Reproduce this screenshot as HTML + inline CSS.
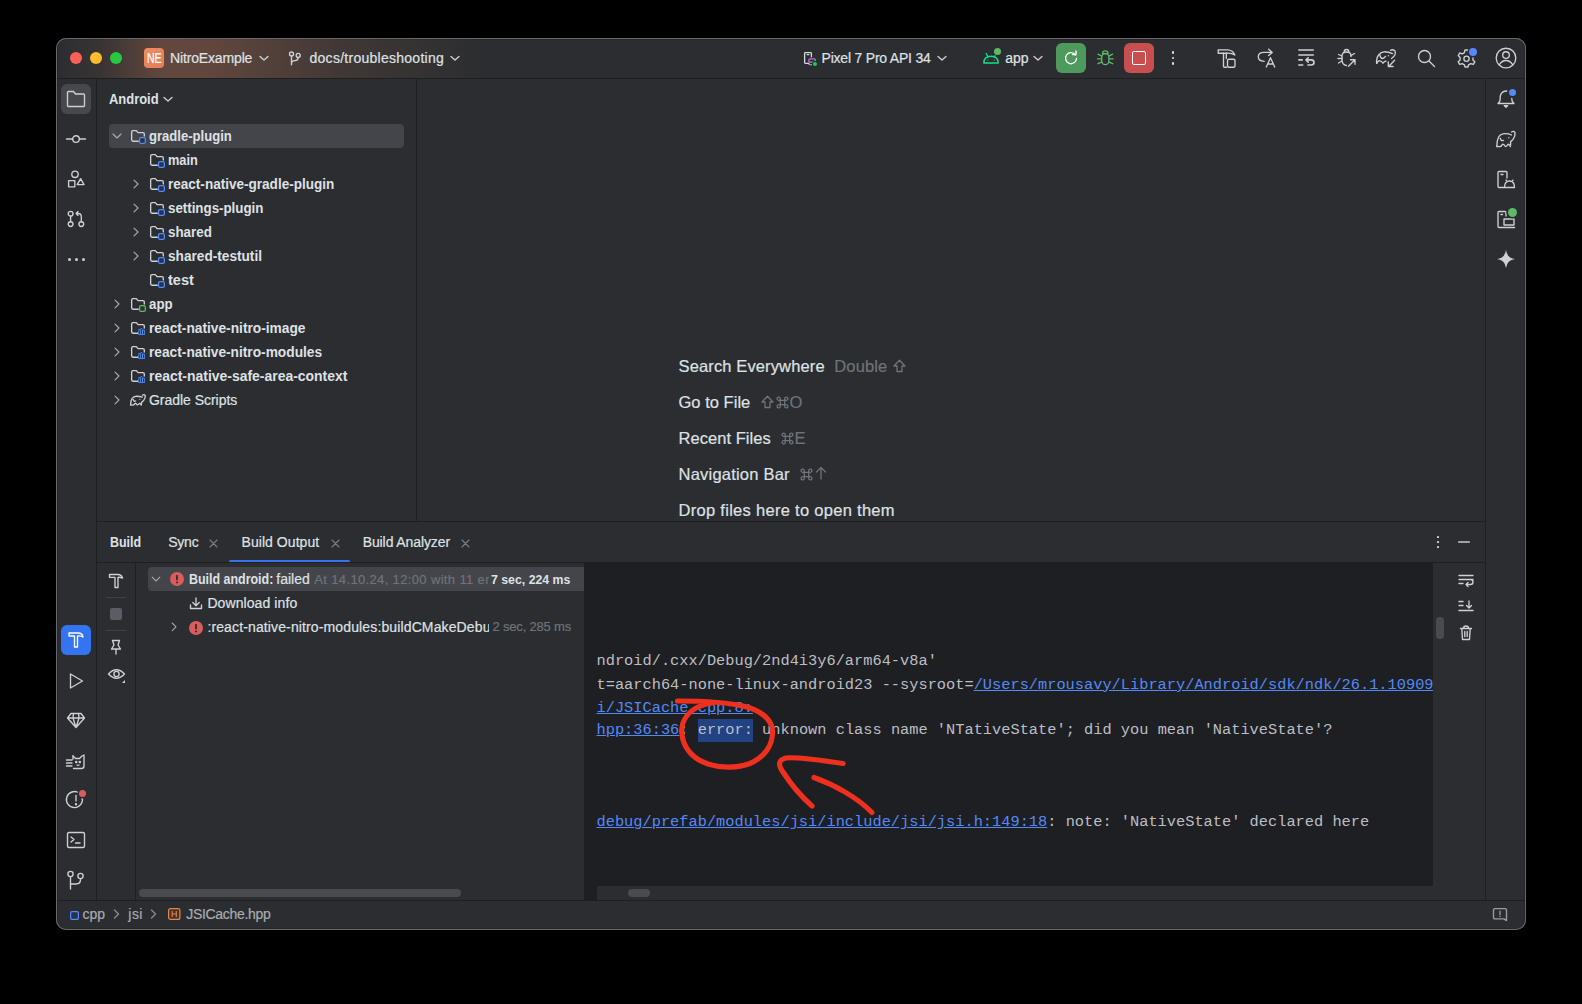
<!DOCTYPE html>
<html><head><meta charset="utf-8"><title>Android Studio</title>
<style>
html,body{margin:0;padding:0;background:#000;width:1582px;height:1004px;overflow:hidden;}
.r{position:absolute;}
.t{position:absolute;white-space:pre;-webkit-text-stroke:0.2px currentColor;}
svg.r{overflow:visible;}
</style></head><body>
<div class="r" style="left:56px;top:38px;width:1470px;height:892px;border-radius:10px;background:#2b2d30;box-shadow:0 0 0 1px #68696c inset, 0 0 0 2px #26272a inset;overflow:hidden;"></div>
<div class="r" style="left:57px;top:39px;width:1468px;height:39px;border-radius:9px 9px 0 0;background:linear-gradient(90deg, rgba(120,85,70,0.0) 0px, rgba(125,85,68,0.18) 45px, rgba(140,92,72,0.56) 105px, rgba(138,90,72,0.56) 155px, rgba(120,85,70,0.27) 285px, rgba(120,85,70,0.0) 430px);"></div>
<div class="r" style="left:57px;top:78px;width:1468px;height:1px;background:#1e1f22;"></div>
<div class="r" style="left:70px;top:52px;width:12px;height:12px;background:#fe5f57;border-radius:50%;"></div>
<div class="r" style="left:90px;top:52px;width:12px;height:12px;background:#febc2e;border-radius:50%;"></div>
<div class="r" style="left:110px;top:52px;width:12px;height:12px;background:#28c840;border-radius:50%;"></div>
<div class="r" style="left:144px;top:48px;width:20px;height:20px;border-radius:4px;background:linear-gradient(135deg,#ee8c5e,#e27e5c);"></div>
<div class="t" style="left:146.8px;top:51.15px;font-family:'Liberation Sans', sans-serif;font-size:14px;line-height:14px;font-weight:400;color:#ffffff;transform:scaleX(0.7505);transform-origin:0 0;">NE</div>
<div class="t" style="left:170px;top:50.95px;font-family:'Liberation Sans', sans-serif;font-size:14px;line-height:14px;font-weight:400;color:#dfe1e5;letter-spacing:-0.148px;">NitroExample</div>
<svg class="r" style="left:258px;top:54px;" width="12" height="8" viewBox="0 0 12 8" fill="none" stroke="#ced0d6" stroke-width="1.35" stroke-linecap="round" stroke-linejoin="round"><path d="M2 2.5 L6 6 L10 2.5"/></svg>
<svg class="r" style="left:287px;top:49px;" width="16" height="18" viewBox="0 0 16 18" fill="none" stroke="#ced0d6" stroke-width="1.35" stroke-linecap="round" stroke-linejoin="round"><circle cx="4.5" cy="5" r="2"/><circle cx="11.2" cy="6.4" r="2"/><path d="M4.5 7 V15.8 M11.2 8.4 Q11.2 11.2 8 11.6 Q4.5 12 4.5 14"/></svg>
<div class="t" style="left:309.5px;top:50.95px;font-family:'Liberation Sans', sans-serif;font-size:14px;line-height:14px;font-weight:400;color:#dfe1e5;letter-spacing:0.268px;">docs/troubleshooting</div>
<svg class="r" style="left:449px;top:54px;" width="12" height="8" viewBox="0 0 12 8" fill="none" stroke="#ced0d6" stroke-width="1.35" stroke-linecap="round" stroke-linejoin="round"><path d="M2 2.5 L6 6 L10 2.5"/></svg>
<svg class="r" style="left:802px;top:50px;" width="18" height="18" viewBox="0 0 18 18" fill="none" stroke="#ced0d6" stroke-width="1.35" stroke-linecap="round" stroke-linejoin="round"><path d="M7 13.3 H3.4 Q2.6 13.3 2.6 12.5 V3.4 Q2.6 2.6 3.4 2.6 H8.6 Q9.4 2.6 9.4 3.4 V6.8" stroke="#d6d8dc" stroke-width="1.3"/><path d="M5.1 4.6 H6.9" stroke="#d6d8dc" stroke-width="1.1"/><rect x="6.9" y="8.8" width="6.3" height="3.4" rx="0.9" stroke="#b974e8" stroke-width="1.3"/><path d="M6.9 14.6 H11.4" stroke="#b974e8" stroke-width="1.3"/></svg>
<div class="r" style="left:813px;top:61.9px;width:4.4px;height:4.4px;background:#00dd3a;border-radius:50%;box-shadow:0 0 0 1px #2b2d30;"></div>
<div class="t" style="left:821.5px;top:51.05px;font-family:'Liberation Sans', sans-serif;font-size:14px;line-height:14px;font-weight:400;color:#dfe1e5;letter-spacing:-0.208px;">Pixel 7 Pro API 34</div>
<svg class="r" style="left:936px;top:54px;" width="12" height="8" viewBox="0 0 12 8" fill="none" stroke="#ced0d6" stroke-width="1.35" stroke-linecap="round" stroke-linejoin="round"><path d="M2 2.5 L6 6 L10 2.5"/></svg>
<svg class="r" style="left:982px;top:50px;" width="18" height="14" viewBox="0 0 18 14" fill="none" stroke="#ced0d6" stroke-width="1.35" stroke-linecap="round" stroke-linejoin="round"><path d="M1.8 13 Q1.8 6.2 9 6.2 Q16.2 6.2 16.2 13 Z" stroke="#14e08a" stroke-width="1.4"/><path d="M4.2 3.5 L5.8 6.3 M13.8 4.5 L12.6 6.3" stroke="#14e08a" stroke-width="1.4"/><circle cx="5.8" cy="10" r="0.9" fill="#1f7a50" stroke="none"/><circle cx="12.2" cy="10" r="0.9" fill="#1f7a50" stroke="none"/></svg>
<div class="r" style="left:994px;top:48px;width:7px;height:7px;background:#5fb865;border-radius:50%;box-shadow:0 0 0 1px #2b2d30;"></div>
<div class="t" style="left:1005.3px;top:51.05px;font-family:'Liberation Sans', sans-serif;font-size:14px;line-height:14px;font-weight:400;color:#dfe1e5;letter-spacing:-0.030px;">app</div>
<svg class="r" style="left:1032px;top:54px;" width="12" height="8" viewBox="0 0 12 8" fill="none" stroke="#ced0d6" stroke-width="1.35" stroke-linecap="round" stroke-linejoin="round"><path d="M2 2.5 L6 6 L10 2.5"/></svg>
<div class="r" style="left:1056px;top:43px;width:30px;height:30px;background:#4e9a5c;border-radius:6px;"></div>
<svg class="r" style="left:1063px;top:50px;" width="16" height="16" viewBox="0 0 16 16" fill="none" stroke="#ced0d6" stroke-width="1.35" stroke-linecap="round" stroke-linejoin="round"><path d="M12.5 5 A5.5 5.5 0 1 0 13.5 8.5" stroke="#ffffff"/><path d="M9.5 4.5 H13 V1" stroke="#ffffff"/></svg>
<svg class="r" style="left:1096px;top:49px;" width="18" height="18" viewBox="0 0 18 18" fill="none" stroke="#ced0d6" stroke-width="1.35" stroke-linecap="round" stroke-linejoin="round"><path d="M6.5 4.6 Q6.5 1.9 9.3 1.9 Q12.1 1.9 12.1 4.6 Z" stroke="#5fb865" stroke-width="1.3"/><rect x="5.7" y="4.6" width="7.2" height="11" rx="3.6" stroke="#5fb865" stroke-width="1.3"/><path d="M2 5.2 L5.8 7.2 M1.4 9.8 H5.7 M2 14.7 L5.8 12.8 M16.6 5.2 L12.8 7.2 M17.2 9.8 H12.9 M16.6 14.7 L12.8 12.8" stroke="#5fb865" stroke-width="1.3"/></svg>
<div class="r" style="left:1124px;top:43px;width:30px;height:30px;background:#c94f4f;border-radius:6px;"></div>
<div class="r" style="left:1132px;top:51px;width:14px;height:14px;background:transparent;border:1.5px solid #ffffff;border-radius:2px;box-sizing:border-box;"></div>
<div class="r" style="left:1171.7px;top:51.300000000000004px;width:2.6px;height:2.6px;background:#dfe1e5;border-radius:50%;"></div>
<div class="r" style="left:1171.7px;top:56.7px;width:2.6px;height:2.6px;background:#dfe1e5;border-radius:50%;"></div>
<div class="r" style="left:1171.7px;top:62.1px;width:2.6px;height:2.6px;background:#dfe1e5;border-radius:50%;"></div>
<svg class="r" style="left:1217px;top:48px;" width="20" height="20" viewBox="0 0 20 20" fill="none" stroke="#ced0d6" stroke-width="1.35" stroke-linecap="round" stroke-linejoin="round"><path d="M1.2 1.8 H10.5 Q16 2 17.8 7 Q14.5 5 10.5 5.2 H1.2 Z"/><path d="M6.5 5.2 V18.5 Q6.5 19.2 7.5 19.2 H9.5 M9.3 5.2 V10.5"/><rect x="10.5" y="11.2" width="7.5" height="8" rx="1.5"/></svg>
<svg class="r" style="left:1257px;top:48px;" width="20" height="20" viewBox="0 0 20 20" fill="none" stroke="#ced0d6" stroke-width="1.35" stroke-linecap="round" stroke-linejoin="round"><path d="M7 4.4 H15.2 M11.6 1.2 L15.2 4.4 L11.6 7.6"/><path d="M7 4.4 Q1.3 4.4 1.3 8.8 Q1.3 13.3 7.2 13.3"/><path d="M9.3 19 L13.5 9.7 L17.7 19 M10.7 16 H16.3"/></svg>
<svg class="r" style="left:1297px;top:48px;" width="20" height="20" viewBox="0 0 20 20" fill="none" stroke="#ced0d6" stroke-width="1.35" stroke-linecap="round" stroke-linejoin="round"><path d="M1.3 2 H16.8 M1.3 7 H16.8 M1.3 11.9 H5.8 M1.3 17 H6.3" stroke-width="1.7" stroke-linecap="butt"/><path d="M9.5 11.9 H14 Q17 11.9 17 14.5 Q17 17 14 17 H11" stroke-width="1.6"/><path d="M11.2 9.7 L9 11.9 L11.2 14.1" stroke-width="1.6"/></svg>
<svg class="r" style="left:1337px;top:48px;" width="20" height="20" viewBox="0 0 20 20" fill="none" stroke="#ced0d6" stroke-width="1.35" stroke-linecap="round" stroke-linejoin="round"><path d="M7.2 4 Q7.2 1.5 9.5 1.5 Q11.8 1.5 11.8 4"/><path d="M14 8.5 V8 Q14 4 9.5 4 Q5 4 5 8 V11.5 Q5 17 9.5 17.5"/><path d="M1.5 6.5 L5 8 M1 10.5 H5 M1.5 15 L5 13 M17.5 5.5 L14 7.5"/><path d="M11.5 18.2 L18 11.7 M13.5 11.7 H18 V16.2"/></svg>
<svg class="r" style="left:1376px;top:48px;" width="21" height="20" viewBox="0 0 21 20" fill="none" stroke="#ced0d6" stroke-width="1.35" stroke-linecap="round" stroke-linejoin="round"><path d="M0.7 15.4 Q0 10 3 6.5 Q5 4 8 3.8 Q12 3.6 16.5 5.6"/><path d="M14.5 2.3 Q16.8 1.2 18.6 2.5 Q20 4 19 6.8 Q18 9 15.5 10.5"/><path d="M3.8 6.9 Q4.5 10.5 6.4 10.5 Q8 10.3 9.5 8.4"/><circle cx="12.4" cy="7.7" r="0.7" fill="#ced0d6" stroke="none"/><path d="M0.7 15.4 Q2 12.5 3.8 12.8 Q5.5 13 7 15.2 Q8.5 13 10.1 13.1"/><path d="M18.6 12.3 L12.7 18.5 M12.3 13.8 V18.5 H17.1"/></svg>
<svg class="r" style="left:1417px;top:49px;" width="19" height="19" viewBox="0 0 19 19" fill="none" stroke="#ced0d6" stroke-width="1.35" stroke-linecap="round" stroke-linejoin="round"><circle cx="7.5" cy="7.5" r="6"/><path d="M12 12 L17.5 17.5"/></svg>
<svg class="r" style="left:1457px;top:48px;" width="19" height="20" viewBox="0 0 19 20" fill="none" stroke="#ced0d6" stroke-width="1.35" stroke-linecap="round" stroke-linejoin="round"><path d="M8 2 H11 L11.6 4.6 L13.8 5.8 L16.3 5 L17.8 7.6 L15.9 9.5 V11.9 L17.8 13.8 L16.3 16.4 L13.8 15.6 L11.6 16.8 L11 19 H8 L7.4 16.8 L5.2 15.6 L2.7 16.4 L1.2 13.8 L3.1 11.9 V9.5 L1.2 7.6 L2.7 5 L5.2 5.8 L7.4 4.6 Z"/><circle cx="9.5" cy="10.7" r="2.6"/></svg>
<div class="r" style="left:1469px;top:48px;width:8px;height:8px;background:#548af7;border-radius:50%;box-shadow:0 0 0 1.5px #2b2d30;"></div>
<svg class="r" style="left:1495px;top:47px;" width="22" height="22" viewBox="0 0 22 22" fill="none" stroke="#ced0d6" stroke-width="1.35" stroke-linecap="round" stroke-linejoin="round"><circle cx="11" cy="11" r="9.8"/><circle cx="11" cy="8" r="3.3"/><path d="M4.5 17.5 Q7 13.5 11 13.5 Q15 13.5 17.5 17.5"/></svg>
<div class="r" style="left:96px;top:79px;width:1px;height:821px;background:#1e1f22;"></div>
<div class="r" style="left:61px;top:84px;width:30px;height:30px;background:#47484c;border-radius:6px;"></div>
<svg class="r" style="left:66px;top:90px;" width="20" height="18" viewBox="0 0 20 18" fill="none" stroke="#ced0d6" stroke-width="1.35" stroke-linecap="round" stroke-linejoin="round"><path d="M1.5 2.5 Q1.5 1.5 2.5 1.5 H7.5 L9.5 4 H17.5 Q18.5 4 18.5 5 V15.5 Q18.5 16.5 17.5 16.5 H2.5 Q1.5 16.5 1.5 15.5 Z"/></svg>
<svg class="r" style="left:65px;top:133px;" width="22" height="12" viewBox="0 0 22 12" fill="none" stroke="#ced0d6" stroke-width="1.35" stroke-linecap="round" stroke-linejoin="round"><circle cx="11" cy="6" r="3.3"/><path d="M1.5 6 H7.7 M14.3 6 H20.5"/></svg>
<svg class="r" style="left:67px;top:170px;" width="18" height="18" viewBox="0 0 18 18" fill="none" stroke="#ced0d6" stroke-width="1.35" stroke-linecap="round" stroke-linejoin="round"><circle cx="8" cy="4.3" r="3.2"/><rect x="1.6" y="10.6" width="6.2" height="6.2"/><path d="M13.6 8.6 L17 14.6 H10.2 Z"/></svg>
<svg class="r" style="left:67px;top:210px;" width="18" height="18" viewBox="0 0 18 18" fill="none" stroke="#ced0d6" stroke-width="1.35" stroke-linecap="round" stroke-linejoin="round"><circle cx="3.6" cy="3.7" r="2.4"/><circle cx="3.6" cy="14.1" r="2.4"/><circle cx="14.3" cy="14.1" r="2.4"/><path d="M3.6 6.1 V11.7 M14.3 11.7 V6.8 Q14.3 3.5 11.3 3.5 H9.2 M11 1.6 L9.1 3.5 L11 5.4"/></svg>
<div class="r" style="left:67.5px;top:257.5px;width:3px;height:3px;background:#ced0d6;border-radius:50%;"></div>
<div class="r" style="left:74.5px;top:257.5px;width:3px;height:3px;background:#ced0d6;border-radius:50%;"></div>
<div class="r" style="left:81.5px;top:257.5px;width:3px;height:3px;background:#ced0d6;border-radius:50%;"></div>
<div class="r" style="left:61px;top:625px;width:30px;height:30px;background:#3574f0;border-radius:6px;"></div>
<svg class="r" style="left:66px;top:630px;" width="20" height="20" viewBox="0 0 20 20" fill="none" stroke="#ced0d6" stroke-width="1.35" stroke-linecap="round" stroke-linejoin="round"><path d="M3 3 H12 Q16.5 3 17 7 Q14 5.5 11.5 6 V17 H8.5 V6 H3 Z" stroke="#ffffff"/></svg>
<svg class="r" style="left:67px;top:672px;" width="18" height="18" viewBox="0 0 18 18" fill="none" stroke="#ced0d6" stroke-width="1.35" stroke-linecap="round" stroke-linejoin="round"><path d="M3.5 2 L15.5 9 L3.5 16 Z"/></svg>
<svg class="r" style="left:66px;top:712px;" width="20" height="17" viewBox="0 0 20 17" fill="none" stroke="#ced0d6" stroke-width="1.35" stroke-linecap="round" stroke-linejoin="round"><path d="M5 1.5 H15 L18.5 6 L10 15.5 L1.5 6 Z M1.5 6 H18.5 M7 6 L10 15.5 L13 6 M7.5 1.5 L7 6 M12.5 1.5 L13 6"/></svg>
<svg class="r" style="left:65px;top:753px;" width="22" height="17" viewBox="0 0 22 17" fill="none" stroke="#ced0d6" stroke-width="1.35" stroke-linecap="round" stroke-linejoin="round"><path d="M8 3 L10.5 5.5 H14.5 L17 3 L19 2 V13 Q19 15.5 16.5 15.5 H8.5"/><path d="M1.5 7 H7 M1.5 10 H7 M1.5 13 H7 M8 3 V6"/><circle cx="11.2" cy="9" r="0.6" fill="#ced0d6"/><circle cx="14.8" cy="9" r="0.6" fill="#ced0d6"/><path d="M12 12 L13 12.5 L14 12"/></svg>
<svg class="r" style="left:66px;top:790px;" width="20" height="20" viewBox="0 0 20 20" fill="none" stroke="#ced0d6" stroke-width="1.35" stroke-linecap="round" stroke-linejoin="round"><path d="M16 7 A8 8 0 1 1 13 3"/><path d="M10 5.5 V11"/><circle cx="10" cy="14.2" r="0.5" fill="#ced0d6"/></svg>
<div class="r" style="left:79px;top:789.5px;width:7px;height:7px;background:#db5c5c;border-radius:50%;box-shadow:0 0 0 1.5px #2b2d30;"></div>
<svg class="r" style="left:66px;top:831px;" width="20" height="18" viewBox="0 0 20 18" fill="none" stroke="#ced0d6" stroke-width="1.35" stroke-linecap="round" stroke-linejoin="round"><rect x="1.5" y="1.5" width="17" height="15" rx="1.5"/><path d="M5 6 L8 8.5 L5 11 M9.5 12 H14"/></svg>
<svg class="r" style="left:66px;top:870px;" width="20" height="20" viewBox="0 0 20 20" fill="none" stroke="#ced0d6" stroke-width="1.35" stroke-linecap="round" stroke-linejoin="round"><circle cx="4.5" cy="4" r="2.6"/><circle cx="14.5" cy="6" r="2.6"/><path d="M4.5 6.6 V19 M4.5 14 H10 Q14.5 14 14.5 9.5 V8.6"/></svg>
<div class="r" style="left:416px;top:79px;width:1px;height:442px;background:#1e1f22;"></div>
<div class="t" style="left:109px;top:92.15px;font-family:'Liberation Sans', sans-serif;font-size:14px;line-height:14px;font-weight:700;color:#dfe1e5;-webkit-text-stroke:0;transform:scaleX(0.9244);transform-origin:0 0;">Android</div>
<svg class="r" style="left:162px;top:95px;" width="12" height="8" viewBox="0 0 12 8" fill="none" stroke="#ced0d6" stroke-width="1.35" stroke-linecap="round" stroke-linejoin="round"><path d="M2 2.5 L6 6 L10 2.5"/></svg>
<div class="r" style="left:109px;top:124px;width:295px;height:24px;background:#43454a;border-radius:4px;"></div>
<svg class="r" style="left:111px;top:131px;" width="12" height="10" viewBox="0 0 12 10" fill="none" stroke="#ced0d6" stroke-width="1.35" stroke-linecap="round" stroke-linejoin="round"><path d="M2 3 L6 7 L10 3" stroke="#a8abb0" stroke-width="1.15"/></svg>
<svg class="r" style="left:130px;top:128px;" width="17" height="16" viewBox="0 0 17 16" fill="none" stroke="#ced0d6" stroke-width="1.35" stroke-linecap="round" stroke-linejoin="round"><path d="M8.3 13.2 H3 Q1.65 13.2 1.65 11.8 V4 Q1.65 2.65 3 2.65 H6.4 L8 4.6 H13 Q14.3 4.6 14.3 5.9 V8"/><rect x="9.55" y="9.65" width="5.8" height="5.8" rx="1.5" fill="#25324d" stroke="#548af7" stroke-width="1.3"/></svg>
<div class="t" style="left:149px;top:128.95px;font-family:'Liberation Sans', sans-serif;font-size:14px;line-height:14px;font-weight:700;color:#dfe1e5;-webkit-text-stroke:0;transform:scaleX(0.9338);transform-origin:0 0;">gradle-plugin</div>
<svg class="r" style="left:149px;top:152px;" width="17" height="16" viewBox="0 0 17 16" fill="none" stroke="#ced0d6" stroke-width="1.35" stroke-linecap="round" stroke-linejoin="round"><path d="M8.3 13.2 H3 Q1.65 13.2 1.65 11.8 V4 Q1.65 2.65 3 2.65 H6.4 L8 4.6 H13 Q14.3 4.6 14.3 5.9 V8"/><rect x="9.55" y="9.65" width="5.8" height="5.8" rx="1.5" fill="#25324d" stroke="#548af7" stroke-width="1.3"/></svg>
<div class="t" style="left:168px;top:152.95px;font-family:'Liberation Sans', sans-serif;font-size:14px;line-height:14px;font-weight:700;color:#dfe1e5;-webkit-text-stroke:0;transform:scaleX(0.9117);transform-origin:0 0;">main</div>
<svg class="r" style="left:131px;top:178px;" width="10" height="12" viewBox="0 0 10 12" fill="none" stroke="#ced0d6" stroke-width="1.35" stroke-linecap="round" stroke-linejoin="round"><path d="M3 2.2 L7 6 L3 9.8" stroke="#a8abb0" stroke-width="1.15"/></svg>
<svg class="r" style="left:149px;top:176px;" width="17" height="16" viewBox="0 0 17 16" fill="none" stroke="#ced0d6" stroke-width="1.35" stroke-linecap="round" stroke-linejoin="round"><path d="M8.3 13.2 H3 Q1.65 13.2 1.65 11.8 V4 Q1.65 2.65 3 2.65 H6.4 L8 4.6 H13 Q14.3 4.6 14.3 5.9 V8"/><rect x="9.55" y="9.65" width="5.8" height="5.8" rx="1.5" fill="#25324d" stroke="#548af7" stroke-width="1.3"/></svg>
<div class="t" style="left:168px;top:176.95px;font-family:'Liberation Sans', sans-serif;font-size:14px;line-height:14px;font-weight:700;color:#dfe1e5;-webkit-text-stroke:0;transform:scaleX(0.9673);transform-origin:0 0;">react-native-gradle-plugin</div>
<svg class="r" style="left:131px;top:202px;" width="10" height="12" viewBox="0 0 10 12" fill="none" stroke="#ced0d6" stroke-width="1.35" stroke-linecap="round" stroke-linejoin="round"><path d="M3 2.2 L7 6 L3 9.8" stroke="#a8abb0" stroke-width="1.15"/></svg>
<svg class="r" style="left:149px;top:200px;" width="17" height="16" viewBox="0 0 17 16" fill="none" stroke="#ced0d6" stroke-width="1.35" stroke-linecap="round" stroke-linejoin="round"><path d="M8.3 13.2 H3 Q1.65 13.2 1.65 11.8 V4 Q1.65 2.65 3 2.65 H6.4 L8 4.6 H13 Q14.3 4.6 14.3 5.9 V8"/><rect x="9.55" y="9.65" width="5.8" height="5.8" rx="1.5" fill="#25324d" stroke="#548af7" stroke-width="1.3"/></svg>
<div class="t" style="left:168px;top:200.95px;font-family:'Liberation Sans', sans-serif;font-size:14px;line-height:14px;font-weight:700;color:#dfe1e5;-webkit-text-stroke:0;transform:scaleX(0.9509);transform-origin:0 0;">settings-plugin</div>
<svg class="r" style="left:131px;top:226px;" width="10" height="12" viewBox="0 0 10 12" fill="none" stroke="#ced0d6" stroke-width="1.35" stroke-linecap="round" stroke-linejoin="round"><path d="M3 2.2 L7 6 L3 9.8" stroke="#a8abb0" stroke-width="1.15"/></svg>
<svg class="r" style="left:149px;top:224px;" width="17" height="16" viewBox="0 0 17 16" fill="none" stroke="#ced0d6" stroke-width="1.35" stroke-linecap="round" stroke-linejoin="round"><path d="M8.3 13.2 H3 Q1.65 13.2 1.65 11.8 V4 Q1.65 2.65 3 2.65 H6.4 L8 4.6 H13 Q14.3 4.6 14.3 5.9 V8"/><rect x="9.55" y="9.65" width="5.8" height="5.8" rx="1.5" fill="#25324d" stroke="#548af7" stroke-width="1.3"/></svg>
<div class="t" style="left:168px;top:224.95px;font-family:'Liberation Sans', sans-serif;font-size:14px;line-height:14px;font-weight:700;color:#dfe1e5;-webkit-text-stroke:0;transform:scaleX(0.9538);transform-origin:0 0;">shared</div>
<svg class="r" style="left:131px;top:250px;" width="10" height="12" viewBox="0 0 10 12" fill="none" stroke="#ced0d6" stroke-width="1.35" stroke-linecap="round" stroke-linejoin="round"><path d="M3 2.2 L7 6 L3 9.8" stroke="#a8abb0" stroke-width="1.15"/></svg>
<svg class="r" style="left:149px;top:248px;" width="17" height="16" viewBox="0 0 17 16" fill="none" stroke="#ced0d6" stroke-width="1.35" stroke-linecap="round" stroke-linejoin="round"><path d="M8.3 13.2 H3 Q1.65 13.2 1.65 11.8 V4 Q1.65 2.65 3 2.65 H6.4 L8 4.6 H13 Q14.3 4.6 14.3 5.9 V8"/><rect x="9.55" y="9.65" width="5.8" height="5.8" rx="1.5" fill="#25324d" stroke="#548af7" stroke-width="1.3"/></svg>
<div class="t" style="left:168px;top:248.95px;font-family:'Liberation Sans', sans-serif;font-size:14px;line-height:14px;font-weight:700;color:#dfe1e5;-webkit-text-stroke:0;transform:scaleX(0.9744);transform-origin:0 0;">shared-testutil</div>
<svg class="r" style="left:149px;top:272px;" width="17" height="16" viewBox="0 0 17 16" fill="none" stroke="#ced0d6" stroke-width="1.35" stroke-linecap="round" stroke-linejoin="round"><path d="M8.3 13.2 H3 Q1.65 13.2 1.65 11.8 V4 Q1.65 2.65 3 2.65 H6.4 L8 4.6 H13 Q14.3 4.6 14.3 5.9 V8"/><rect x="9.55" y="9.65" width="5.8" height="5.8" rx="1.5" fill="#25324d" stroke="#548af7" stroke-width="1.3"/></svg>
<div class="t" style="left:168px;top:272.95px;font-family:'Liberation Sans', sans-serif;font-size:14px;line-height:14px;font-weight:700;color:#dfe1e5;-webkit-text-stroke:0;transform:scaleX(1.0359);transform-origin:0 0;">test</div>
<svg class="r" style="left:112px;top:298px;" width="10" height="12" viewBox="0 0 10 12" fill="none" stroke="#ced0d6" stroke-width="1.35" stroke-linecap="round" stroke-linejoin="round"><path d="M3 2.2 L7 6 L3 9.8" stroke="#a8abb0" stroke-width="1.15"/></svg>
<svg class="r" style="left:130px;top:296px;" width="17" height="16" viewBox="0 0 17 16" fill="none" stroke="#ced0d6" stroke-width="1.35" stroke-linecap="round" stroke-linejoin="round"><path d="M8.3 13.2 H3 Q1.65 13.2 1.65 11.8 V4 Q1.65 2.65 3 2.65 H6.4 L8 4.6 H13 Q14.3 4.6 14.3 5.9 V8"/><rect x="9.55" y="9.65" width="5.8" height="5.8" rx="1.5" fill="#253a2e" stroke="#5fb865" stroke-width="1.3"/></svg>
<div class="t" style="left:149px;top:296.95px;font-family:'Liberation Sans', sans-serif;font-size:14px;line-height:14px;font-weight:700;color:#dfe1e5;-webkit-text-stroke:0;transform:scaleX(0.9481);transform-origin:0 0;">app</div>
<svg class="r" style="left:112px;top:322px;" width="10" height="12" viewBox="0 0 10 12" fill="none" stroke="#ced0d6" stroke-width="1.35" stroke-linecap="round" stroke-linejoin="round"><path d="M3 2.2 L7 6 L3 9.8" stroke="#a8abb0" stroke-width="1.15"/></svg>
<svg class="r" style="left:130px;top:320px;" width="17" height="16" viewBox="0 0 17 16" fill="none" stroke="#ced0d6" stroke-width="1.35" stroke-linecap="round" stroke-linejoin="round"><path d="M8.3 13.2 H3 Q1.65 13.2 1.65 11.8 V4 Q1.65 2.65 3 2.65 H6.4 L8 4.6 H13 Q14.3 4.6 14.3 5.9 V8"/><path d="M8.2 15 V10.2 Q8.2 9.1 9.3 9.1 Q10.2 9.1 10.4 9.6 V9 Q10.4 8 11.4 8 Q12.4 8 12.4 9 V9.9 Q12.8 9.4 13.6 9.4 Q14.9 9.4 14.9 10.6 V15 Z" fill="#548af7" stroke="none"/><path d="M9.4 10.5 V13.8 M11.4 9.3 V13.8 M13.6 10.8 V13.8" stroke="#1e2436" stroke-width="0.9"/></svg>
<div class="t" style="left:149px;top:320.95px;font-family:'Liberation Sans', sans-serif;font-size:14px;line-height:14px;font-weight:700;color:#dfe1e5;-webkit-text-stroke:0;transform:scaleX(0.9813);transform-origin:0 0;">react-native-nitro-image</div>
<svg class="r" style="left:112px;top:346px;" width="10" height="12" viewBox="0 0 10 12" fill="none" stroke="#ced0d6" stroke-width="1.35" stroke-linecap="round" stroke-linejoin="round"><path d="M3 2.2 L7 6 L3 9.8" stroke="#a8abb0" stroke-width="1.15"/></svg>
<svg class="r" style="left:130px;top:344px;" width="17" height="16" viewBox="0 0 17 16" fill="none" stroke="#ced0d6" stroke-width="1.35" stroke-linecap="round" stroke-linejoin="round"><path d="M8.3 13.2 H3 Q1.65 13.2 1.65 11.8 V4 Q1.65 2.65 3 2.65 H6.4 L8 4.6 H13 Q14.3 4.6 14.3 5.9 V8"/><path d="M8.2 15 V10.2 Q8.2 9.1 9.3 9.1 Q10.2 9.1 10.4 9.6 V9 Q10.4 8 11.4 8 Q12.4 8 12.4 9 V9.9 Q12.8 9.4 13.6 9.4 Q14.9 9.4 14.9 10.6 V15 Z" fill="#548af7" stroke="none"/><path d="M9.4 10.5 V13.8 M11.4 9.3 V13.8 M13.6 10.8 V13.8" stroke="#1e2436" stroke-width="0.9"/></svg>
<div class="t" style="left:149px;top:344.95px;font-family:'Liberation Sans', sans-serif;font-size:14px;line-height:14px;font-weight:700;color:#dfe1e5;-webkit-text-stroke:0;transform:scaleX(0.9802);transform-origin:0 0;">react-native-nitro-modules</div>
<svg class="r" style="left:112px;top:370px;" width="10" height="12" viewBox="0 0 10 12" fill="none" stroke="#ced0d6" stroke-width="1.35" stroke-linecap="round" stroke-linejoin="round"><path d="M3 2.2 L7 6 L3 9.8" stroke="#a8abb0" stroke-width="1.15"/></svg>
<svg class="r" style="left:130px;top:368px;" width="17" height="16" viewBox="0 0 17 16" fill="none" stroke="#ced0d6" stroke-width="1.35" stroke-linecap="round" stroke-linejoin="round"><path d="M8.3 13.2 H3 Q1.65 13.2 1.65 11.8 V4 Q1.65 2.65 3 2.65 H6.4 L8 4.6 H13 Q14.3 4.6 14.3 5.9 V8"/><path d="M8.2 15 V10.2 Q8.2 9.1 9.3 9.1 Q10.2 9.1 10.4 9.6 V9 Q10.4 8 11.4 8 Q12.4 8 12.4 9 V9.9 Q12.8 9.4 13.6 9.4 Q14.9 9.4 14.9 10.6 V15 Z" fill="#548af7" stroke="none"/><path d="M9.4 10.5 V13.8 M11.4 9.3 V13.8 M13.6 10.8 V13.8" stroke="#1e2436" stroke-width="0.9"/></svg>
<div class="t" style="left:149px;top:368.95px;font-family:'Liberation Sans', sans-serif;font-size:14px;line-height:14px;font-weight:700;color:#dfe1e5;-webkit-text-stroke:0;transform:scaleX(0.9960);transform-origin:0 0;">react-native-safe-area-context</div>
<svg class="r" style="left:112px;top:394px;" width="10" height="12" viewBox="0 0 10 12" fill="none" stroke="#ced0d6" stroke-width="1.35" stroke-linecap="round" stroke-linejoin="round"><path d="M3 2.2 L7 6 L3 9.8" stroke="#a8abb0" stroke-width="1.15"/></svg>
<svg class="r" style="left:130px;top:394px;" width="17" height="13" viewBox="0 0 17 13" fill="none" stroke="#ced0d6" stroke-width="1.35" stroke-linecap="round" stroke-linejoin="round"><path d="M0.6 10.9 Q0.5 7 2 4.5 Q3.5 2.2 6.5 2.2 Q10 2.2 12.2 3.2"/><path d="M12.5 1.2 Q14.5 0 15.2 1.6 Q15.5 4.5 13.6 6.6 Q12 8 11.4 8.5 V10.5"/><path d="M11.2 11 Q10.2 9.3 9.3 9.5 Q8.3 11 7.2 10.9 Q6 9.2 5.1 9.3 Q4 11 3 11.1 Q2 11 0.6 10.9"/><path d="M3.2 5.5 Q3.8 7.8 5.6 7"/><circle cx="9.9" cy="5.3" r="0.6" fill="#ced0d6" stroke="none"/></svg>
<div class="t" style="left:149px;top:392.95px;font-family:'Liberation Sans', sans-serif;font-size:14px;line-height:14px;font-weight:400;color:#dfe1e5;letter-spacing:-0.031px;">Gradle Scripts</div>
<div class="t" style="left:678.5px;top:358.03px;font-family:'Liberation Sans', sans-serif;font-size:16.5px;line-height:16.5px;font-weight:400;color:#dfe1e5;letter-spacing:0.132px;">Search Everywhere</div>
<div class="t" style="left:834.3px;top:358.03px;font-family:'Liberation Sans', sans-serif;font-size:16.5px;line-height:16.5px;font-weight:400;color:#6f737a;letter-spacing:0.141px;">Double</div>
<svg class="r" style="left:893px;top:359px" width="13" height="14" viewBox="0 0 13 14" fill="none" stroke="#6f737a" stroke-width="1.3" stroke-linejoin="round"><path d="M6.5 1.2 L12 7 H9 V12.5 H4 V7 H1 Z"/></svg>
<div class="t" style="left:678.5px;top:394.03px;font-family:'Liberation Sans', sans-serif;font-size:16.5px;line-height:16.5px;font-weight:400;color:#dfe1e5;letter-spacing:0.030px;">Go to File</div>
<svg class="r" style="left:761px;top:395px" width="13" height="14" viewBox="0 0 13 14" fill="none" stroke="#6f737a" stroke-width="1.3" stroke-linejoin="round"><path d="M6.5 1.2 L12 7 H9 V12.5 H4 V7 H1 Z"/></svg>
<svg class="r" style="left:776px;top:396px" width="13" height="13" viewBox="0 0 13 13" fill="none" stroke="#6f737a" stroke-width="1.3"><path d="M4.3 4.3 H8.7 V8.7 H4.3 Z M4.3 4.3 V2.8 A1.6 1.6 0 1 0 2.8 4.3 H4.3 M8.7 4.3 V2.8 A1.6 1.6 0 1 1 10.2 4.3 H8.7 M8.7 8.7 V10.2 A1.6 1.6 0 1 0 10.2 8.7 H8.7 M4.3 8.7 V10.2 A1.6 1.6 0 1 1 2.8 8.7 H4.3"/></svg>
<div class="t" style="left:789.5px;top:394.03px;font-family:'Liberation Sans', sans-serif;font-size:16.5px;line-height:16.5px;font-weight:400;color:#6f737a;">O</div>
<div class="t" style="left:678.5px;top:430.03px;font-family:'Liberation Sans', sans-serif;font-size:16.5px;line-height:16.5px;font-weight:400;color:#dfe1e5;letter-spacing:0.045px;">Recent Files</div>
<svg class="r" style="left:781px;top:432px" width="13" height="13" viewBox="0 0 13 13" fill="none" stroke="#6f737a" stroke-width="1.3"><path d="M4.3 4.3 H8.7 V8.7 H4.3 Z M4.3 4.3 V2.8 A1.6 1.6 0 1 0 2.8 4.3 H4.3 M8.7 4.3 V2.8 A1.6 1.6 0 1 1 10.2 4.3 H8.7 M8.7 8.7 V10.2 A1.6 1.6 0 1 0 10.2 8.7 H8.7 M4.3 8.7 V10.2 A1.6 1.6 0 1 1 2.8 8.7 H4.3"/></svg>
<div class="t" style="left:794.5px;top:430.03px;font-family:'Liberation Sans', sans-serif;font-size:16.5px;line-height:16.5px;font-weight:400;color:#6f737a;">E</div>
<div class="t" style="left:678.5px;top:466.03px;font-family:'Liberation Sans', sans-serif;font-size:16.5px;line-height:16.5px;font-weight:400;color:#dfe1e5;letter-spacing:0.220px;">Navigation Bar</div>
<svg class="r" style="left:799.5px;top:468px" width="13" height="13" viewBox="0 0 13 13" fill="none" stroke="#6f737a" stroke-width="1.3"><path d="M4.3 4.3 H8.7 V8.7 H4.3 Z M4.3 4.3 V2.8 A1.6 1.6 0 1 0 2.8 4.3 H4.3 M8.7 4.3 V2.8 A1.6 1.6 0 1 1 10.2 4.3 H8.7 M8.7 8.7 V10.2 A1.6 1.6 0 1 0 10.2 8.7 H8.7 M4.3 8.7 V10.2 A1.6 1.6 0 1 1 2.8 8.7 H4.3"/></svg>
<svg class="r" style="left:815px;top:466px" width="12" height="14" viewBox="0 0 12 14" fill="none" stroke="#6f737a" stroke-width="1.3" stroke-linejoin="round" stroke-linecap="round"><path d="M6 1.5 V13 M1.5 6 L6 1.5 L10.5 6"/></svg>
<div class="t" style="left:678.5px;top:502.03px;font-family:'Liberation Sans', sans-serif;font-size:16.5px;line-height:16.5px;font-weight:400;color:#dfe1e5;letter-spacing:0.292px;">Drop files here to open them</div>
<div class="r" style="left:1485px;top:79px;width:1px;height:821px;background:#1e1f22;"></div>
<svg class="r" style="left:1496px;top:88px;" width="20" height="22" viewBox="0 0 20 22" fill="none" stroke="#ced0d6" stroke-width="1.35" stroke-linecap="round" stroke-linejoin="round"><path d="M2 15.5 Q4.2 14 4.2 11 V8.8 A5.8 5.8 0 0 1 15.8 8.8 V11 Q15.8 14 18 15.5 Z"/><path d="M8.3 17.6 H11.7 L10 19.3 Z" fill="#ced0d6"/></svg>
<div class="r" style="left:1508.5px;top:88.5px;width:7.5px;height:7.5px;background:#548af7;border-radius:50%;box-shadow:0 0 0 2px #2b2d30;"></div>
<svg class="r" style="left:1496px;top:130px;" width="20" height="19" viewBox="0 0 20 19" fill="none" stroke="#ced0d6" stroke-width="1.35" stroke-linecap="round" stroke-linejoin="round"><path d="M0.8 16.5 Q0.6 11 2.6 7 Q4.8 3.6 9 3.6 Q13 3.6 15.5 5"/><path d="M15.5 2 Q18 0.5 19 2.6 Q19.5 6.5 17 9.5 Q15.5 11 14.6 11.6 V15"/><path d="M14.4 16.6 Q13.2 14 12 14.3 Q10.8 16.5 9.4 16.5 Q8 14 6.7 14.1 Q5.3 16.5 4 16.6 Q2.5 16.6 0.8 16.5"/><path d="M4.2 8.2 Q5 11.4 7.4 10.4"/><circle cx="12.8" cy="7.8" r="0.7" fill="#ced0d6" stroke="none"/></svg>
<svg class="r" style="left:1496px;top:170px;" width="20" height="19" viewBox="0 0 20 19" fill="none" stroke="#ced0d6" stroke-width="1.35" stroke-linecap="round" stroke-linejoin="round"><path d="M8 17.5 H3 Q2 17.5 2 16.5 V2.5 Q2 1.5 3 1.5 H10 Q11 1.5 11 2.5 V8"/><path d="M5 4.5 H7"/><path d="M8.5 17.5 Q8.5 11 13.5 11 Q18.5 11 18.5 17.5 Z M10 10 L11 11.5 M17 10 L16 11.5"/></svg>
<svg class="r" style="left:1496px;top:210px;" width="20" height="19" viewBox="0 0 20 19" fill="none" stroke="#ced0d6" stroke-width="1.35" stroke-linecap="round" stroke-linejoin="round"><path d="M7 17.5 H3 Q2 17.5 2 16.5 V2.5 Q2 1.5 3 1.5 H9 Q10 1.5 10 2.5 V6"/><path d="M5 4.5 H6.5"/><rect x="8" y="9" width="10" height="6"/><path d="M7.5 17.5 H18.5"/></svg>
<div class="r" style="left:1508px;top:208px;width:9px;height:9px;background:#5fb865;border-radius:50%;box-shadow:0 0 0 1.5px #2b2d30;"></div>
<svg class="r" style="left:1496px;top:249px" width="20" height="20" viewBox="0 0 20 20"><path d="M10 1 Q11 9 19 10 Q11 11 10 19 Q9 11 1 10 Q9 9 10 1 Z" fill="#ced0d6"/></svg>
<div class="r" style="left:97px;top:521px;width:1388px;height:1px;background:#1e1f22;"></div>
<div class="t" style="left:109.5px;top:534.95px;font-family:'Liberation Sans', sans-serif;font-size:14px;line-height:14px;font-weight:700;color:#dfe1e5;-webkit-text-stroke:0;transform:scaleX(0.8886);transform-origin:0 0;">Build</div>
<div class="t" style="left:168.2px;top:534.95px;font-family:'Liberation Sans', sans-serif;font-size:14px;line-height:14px;font-weight:400;color:#dfe1e5;letter-spacing:-0.208px;">Sync</div>
<svg class="r" style="left:209.3px;top:538.8px" width="9" height="9" viewBox="0 0 9 9" stroke="#7b7e85" stroke-width="1.1" stroke-linecap="round"><path d="M1 1 L8 8 M8 1 L1 8"/></svg>
<div class="t" style="left:241.5px;top:534.95px;font-family:'Liberation Sans', sans-serif;font-size:14px;line-height:14px;font-weight:400;color:#dfe1e5;letter-spacing:0.058px;">Build Output</div>
<svg class="r" style="left:330.8px;top:538.8px" width="9" height="9" viewBox="0 0 9 9" stroke="#7b7e85" stroke-width="1.1" stroke-linecap="round"><path d="M1 1 L8 8 M8 1 L1 8"/></svg>
<div class="r" style="left:229px;top:559.5px;width:121px;height:3px;background:#3574f0;border-radius:1.5px;"></div>
<div class="t" style="left:362.7px;top:534.95px;font-family:'Liberation Sans', sans-serif;font-size:14px;line-height:14px;font-weight:400;color:#dfe1e5;letter-spacing:-0.101px;">Build Analyzer</div>
<svg class="r" style="left:461.3px;top:538.8px" width="9" height="9" viewBox="0 0 9 9" stroke="#7b7e85" stroke-width="1.1" stroke-linecap="round"><path d="M1 1 L8 8 M8 1 L1 8"/></svg>
<div class="r" style="left:1436.8px;top:535.8px;width:2.4px;height:2.4px;background:#ced0d6;border-radius:0.6px;"></div>
<div class="r" style="left:1436.8px;top:540.8px;width:2.4px;height:2.4px;background:#ced0d6;border-radius:0.6px;"></div>
<div class="r" style="left:1436.8px;top:545.8px;width:2.4px;height:2.4px;background:#ced0d6;border-radius:0.6px;"></div>
<div class="r" style="left:1457.8px;top:541.2px;width:12.4px;height:1.6px;background:#a0a2a6;border-radius:0.8px;"></div>
<div class="r" style="left:97px;top:562px;width:1388px;height:1px;background:#1e1f22;"></div>
<div class="r" style="left:135px;top:563px;width:1px;height:337px;background:#1e1f22;"></div>
<svg class="r" style="left:107px;top:572px;" width="18" height="18" viewBox="0 0 18 18" fill="none" stroke="#ced0d6" stroke-width="1.35" stroke-linecap="round" stroke-linejoin="round"><path d="M2.5 2.5 H11 Q14.5 2.5 15.5 6 Q13 5 11 5.3 V15.5 H8 V5.3 H2.5 Z"/></svg>
<div class="r" style="left:106px;top:597px;width:20px;height:1px;background:#3c3f44;"></div>
<div class="r" style="left:110px;top:608px;width:12px;height:12px;background:#5a5d63;border-radius:2px;"></div>
<div class="r" style="left:106px;top:630px;width:20px;height:1px;background:#3c3f44;"></div>
<svg class="r" style="left:108px;top:639px;" width="16" height="16" viewBox="0 0 16 16" fill="none" stroke="#ced0d6" stroke-width="1.35" stroke-linecap="round" stroke-linejoin="round"><path d="M4.5 1.5 H11.5 L10 6 L12.5 10 H3.5 L6 6 Z M8 10 V15"/></svg>
<svg class="r" style="left:107px;top:665px;" width="20" height="20" viewBox="0 0 20 20" fill="none" stroke="#ced0d6" stroke-width="1.35" stroke-linecap="round" stroke-linejoin="round"><path d="M1.5 9 Q9.5 0.5 17.5 9 Q9.5 17.5 1.5 9 Z"/><circle cx="9.5" cy="9" r="2.6"/><path d="M15 18 L18 15 V18 Z" fill="#ced0d6" stroke="none"/></svg>
<div class="r" style="left:148px;top:567px;width:436px;height:24px;background:#43454a;border-radius:4px 0 0 4px;"></div>
<svg class="r" style="left:150px;top:574px;" width="12" height="10" viewBox="0 0 12 10" fill="none" stroke="#ced0d6" stroke-width="1.35" stroke-linecap="round" stroke-linejoin="round"><path d="M2.2 3.2 L6 7 L9.8 3.2" stroke="#a0a3a8" stroke-width="1.15"/></svg>
<svg class="r" style="left:170px;top:572px" width="14" height="14" viewBox="0 0 14 14"><circle cx="7" cy="7" r="7" fill="#db5c5c"/><rect x="6.1" y="3" width="1.8" height="5.2" rx="0.4" fill="#2b2d30"/><rect x="6.1" y="9.6" width="1.8" height="1.7" rx="0.3" fill="#2b2d30"/></svg>
<div class="t" style="left:188.5px;top:571.95px;font-family:'Liberation Sans', sans-serif;font-size:14px;line-height:14px;font-weight:700;color:#dfe1e5;-webkit-text-stroke:0;transform:scaleX(0.8884);transform-origin:0 0;">Build android:</div>
<div class="t" style="left:276.3px;top:571.95px;font-family:'Liberation Sans', sans-serif;font-size:14px;line-height:14px;font-weight:400;color:#dfe1e5;letter-spacing:0.006px;">failed</div>
<div class="t" style="left:314.3px;top:572.60px;font-family:'Liberation Sans', sans-serif;font-size:13px;line-height:13px;font-weight:400;color:#6f737a;width:174.5px;overflow:hidden;letter-spacing:0.354px;">At 14.10.24, 12:00 with 11 errors</div>
<div class="t" style="left:490.9px;top:572.60px;font-family:'Liberation Sans', sans-serif;font-size:13px;line-height:13px;font-weight:700;color:#dfe1e5;-webkit-text-stroke:0;transform:scaleX(0.9468);transform-origin:0 0;">7 sec, 224 ms</div>
<svg class="r" style="left:189px;top:597px;" width="14" height="13" viewBox="0 0 14 13" fill="none" stroke="#ced0d6" stroke-width="1.35" stroke-linecap="round" stroke-linejoin="round"><path d="M7 1 V8.5 M3.8 5.5 L7 8.7 L10.2 5.5 M1.5 8 V11.5 H12.5 V8"/></svg>
<div class="t" style="left:207.4px;top:595.95px;font-family:'Liberation Sans', sans-serif;font-size:14px;line-height:14px;font-weight:400;color:#dfe1e5;letter-spacing:0.089px;">Download info</div>
<svg class="r" style="left:169px;top:621px;" width="10" height="12" viewBox="0 0 10 12" fill="none" stroke="#ced0d6" stroke-width="1.35" stroke-linecap="round" stroke-linejoin="round"><path d="M3.2 2 L7 5.8 L3.2 9.6" stroke="#a0a3a8" stroke-width="1.15"/></svg>
<svg class="r" style="left:189px;top:620.5px" width="14" height="14" viewBox="0 0 14 14"><circle cx="7" cy="7" r="7" fill="#db5c5c"/><rect x="6.1" y="3" width="1.8" height="5.2" rx="0.4" fill="#2b2d30"/><rect x="6.1" y="9.6" width="1.8" height="1.7" rx="0.3" fill="#2b2d30"/></svg>
<div class="t" style="left:207.4px;top:619.75px;font-family:'Liberation Sans', sans-serif;font-size:14px;line-height:14px;font-weight:400;color:#dfe1e5;width:282px;overflow:hidden;letter-spacing:0.129px;">:react-native-nitro-modules:buildCMakeDebug</div>
<div class="t" style="left:492.5px;top:620.40px;font-family:'Liberation Sans', sans-serif;font-size:13px;line-height:13px;font-weight:400;color:#6f737a;letter-spacing:-0.186px;">2 sec, 285 ms</div>
<div class="r" style="left:139px;top:889px;width:322px;height:8px;background:#4a4b4e;border-radius:4px;"></div>
<div class="r" style="left:584px;top:563px;width:849px;height:337px;background:#1e1f22;"></div>
<div class="r" style="left:597px;top:886px;width:836px;height:14px;background:#2b2d30;"></div>
<div class="r" style="left:628px;top:889px;width:22px;height:8px;background:#4a4b4e;border-radius:4px;"></div>
<div class="r" style="left:1436px;top:617px;width:8px;height:22px;background:#4a4b4e;border-radius:4px;"></div>
<svg class="r" style="left:1457px;top:573px;" width="18" height="16" viewBox="0 0 18 16" fill="none" stroke="#ced0d6" stroke-width="1.35" stroke-linecap="round" stroke-linejoin="round"><path d="M2 2.5 H16 M2 6.5 H16 M2 10.5 H6 M13.5 6.5 Q16 6.5 16 9 Q16 11.5 13.5 11.5 H9 M11 9.5 L9 11.5 L11 13.5" /></svg>
<svg class="r" style="left:1457px;top:599px;" width="18" height="16" viewBox="0 0 18 16" fill="none" stroke="#ced0d6" stroke-width="1.35" stroke-linecap="round" stroke-linejoin="round"><path d="M2 2.5 H6 M2 6.5 H6 M2 11.5 H16 M12 2 V9 M9.5 6.5 L12 9 L14.5 6.5"/></svg>
<svg class="r" style="left:1458px;top:624px;" width="16" height="18" viewBox="0 0 16 18" fill="none" stroke="#ced0d6" stroke-width="1.35" stroke-linecap="round" stroke-linejoin="round"><path d="M2.5 4.5 H13.5 M5.5 4.5 Q5.5 2 8 2 Q10.5 2 10.5 4.5 M3.8 4.5 L4.5 15.5 H11.5 L12.2 4.5 M6.8 7.5 V12.5 M9.2 7.5 V12.5"/></svg>
<div class="r" style="left:585px;top:640px;width:848px;height:246px;overflow:hidden;">
<div class="t" style="left:11.5px;top:14.45px;font-family:'Liberation Mono', monospace;font-size:15.33px;line-height:15.33px;color:#bcbec4;-webkit-text-stroke:0;">ndroid/.cxx/Debug/2nd4i3y6/arm64-v8a'</div>
<div class="t" style="left:11.5px;top:37.85px;font-family:'Liberation Mono', monospace;font-size:15.33px;line-height:15.33px;color:#bcbec4;-webkit-text-stroke:0;">t=aarch64-none-linux-android23 --sysroot=<u style='color:#548af7'>/Users/mrousavy/Library/Android/sdk/ndk/26.1.10909125/toolchains</u></div>
<div class="t" style="left:11.5px;top:60.65px;font-family:'Liberation Mono', monospace;font-size:15.33px;line-height:15.33px;color:#bcbec4;-webkit-text-stroke:0;"><u style='color:#548af7'>i/JSICache.cpp:8:</u></div>
<div class="t" style="left:11.5px;top:83.35px;font-family:'Liberation Mono', monospace;font-size:15.33px;line-height:15.33px;color:#bcbec4;-webkit-text-stroke:0;"><u style='color:#548af7'>hpp:36:36</u>: <span style='background:#214283;box-shadow:0 3px 0 #214283, 0 -2px 0 #214283'>error:</span> unknown class name 'NTativeState'; did you mean 'NativeState'?</div>
<div class="t" style="left:11.5px;top:175.35px;font-family:'Liberation Mono', monospace;font-size:15.33px;line-height:15.33px;color:#bcbec4;-webkit-text-stroke:0;"><u style='color:#548af7'>debug/prefab/modules/jsi/include/jsi/jsi.h:149:18</u>: note: 'NativeState' declared here</div>
</div>
<div class="r" style="left:57px;top:900px;width:1468px;height:1px;background:#1e1f22;"></div>
<svg class="r" style="left:69.5px;top:910.5px" width="9" height="9" viewBox="0 0 9 9"><rect x="0.6" y="0.6" width="7.8" height="7.8" rx="1.4" fill="#25324d" stroke="#548af7" stroke-width="1.2"/></svg>
<div class="t" style="left:82.5px;top:907.05px;font-family:'Liberation Sans', sans-serif;font-size:14px;line-height:14px;font-weight:400;color:#a8abb0;letter-spacing:0.011px;">cpp</div>
<svg class="r" style="left:112px;top:908px;" width="9" height="12" viewBox="0 0 9 12" fill="none" stroke="#ced0d6" stroke-width="1.35" stroke-linecap="round" stroke-linejoin="round"><path d="M2.5 2 L6.5 6 L2.5 10" stroke="#868a91"/></svg>
<div class="t" style="left:128.3px;top:907.05px;font-family:'Liberation Sans', sans-serif;font-size:14px;line-height:14px;font-weight:400;color:#a8abb0;letter-spacing:0.483px;">jsi</div>
<svg class="r" style="left:149px;top:908px;" width="9" height="12" viewBox="0 0 9 12" fill="none" stroke="#ced0d6" stroke-width="1.35" stroke-linecap="round" stroke-linejoin="round"><path d="M2.5 2 L6.5 6 L2.5 10" stroke="#868a91"/></svg>
<svg class="r" style="left:167.8px;top:908.3px" width="12.5" height="12" viewBox="0 0 12.5 12"><rect x="0.6" y="0.6" width="11.3" height="10.8" rx="2" fill="#4a3325" stroke="#e08855" stroke-width="1.2"/><path d="M4.2 3 V9 M8.3 3 V9 M4.2 6 H8.3" stroke="#e08855" stroke-width="1.1"/></svg>
<div class="t" style="left:186.2px;top:907.05px;font-family:'Liberation Sans', sans-serif;font-size:14px;line-height:14px;font-weight:400;color:#a8abb0;letter-spacing:-0.296px;">JSICache.hpp</div>
<svg class="r" style="left:1492px;top:906px;" width="16" height="16" viewBox="0 0 16 16" fill="none" stroke="#ced0d6" stroke-width="1.35" stroke-linecap="round" stroke-linejoin="round"><path d="M3 2.6 H13 Q14.5 2.6 14.5 4.1 V14.6 L12 12.9 H3 Q1.5 12.9 1.5 11.4 V4.1 Q1.5 2.6 3 2.6 Z" stroke="#9a9da2"/><path d="M8 5.2 V8.4 M8 10.1 V10.4" stroke="#9a9da2"/></svg>
<svg class="r" style="left:0;top:0" width="1582" height="1004" viewBox="0 0 1582 1004" fill="none" stroke="#f0301f" stroke-linecap="round" stroke-linejoin="round"><path stroke-width="5.2" d="M677.5 701 C690 701 725 701.5 745 706.5 C762 711 772 720 772.5 731 C773 745 765 757 750 763.5 C738 768 722 768.5 708 764 C693 759 683 748 681.8 733 C681 720 689 711 700 706 C705 704 710 703 714 702.5"/><path stroke-width="5.2" d="M843 763.5 C820 760 795 757 786 758 C778 760 778 765 783 772 C792 786 803 798 812 806"/><path stroke-width="5.2" d="M814 777.5 C835 785 858 798 872 812.5"/></svg>
</body></html>
